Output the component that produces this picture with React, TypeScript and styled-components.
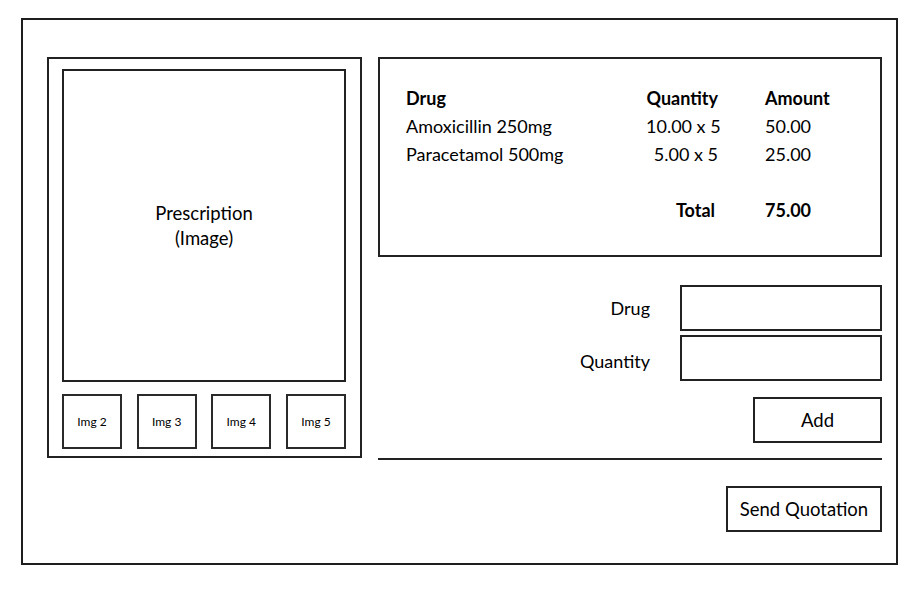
import React from "react";
import styled, { createGlobalStyle } from "styled-components";

const GlobalStyle = createGlobalStyle`
  html, body {
    margin: 0;
    padding: 0;
    background: #fff;
  }
  body {
    font-family: Lato, "Open Sans", sans-serif;
    color: #000;
  }
  * {
    box-sizing: border-box;
  }
`;

const Frame = styled.div`
  margin: 18px 0 0 21px;
  width: 877px;
  height: 547px;
  border: 2px solid #1e1e1e;
  display: flex;
  flex-direction: row;
  gap: 16px;
  padding: 37px 14px 0 24px;
`;

const Gallery = styled.div`
  width: 315px;
  height: 401px;
  border: 2px solid #222;
  display: flex;
  flex-direction: column;
  padding: 10px 14px 0 13px;
`;

const MainImage = styled.div`
  height: 313px;
  border: 2px solid #222;
  display: flex;
  align-items: center;
  justify-content: center;
  text-align: center;
  font-size: 18.5px;
  line-height: 25px;
`;

const ThumbRow = styled.div`
  display: flex;
  justify-content: space-between;
  margin-top: 12px;
`;

const Thumb = styled.div`
  width: 60px;
  height: 55px;
  border: 2px solid #2a2a2a;
  display: flex;
  align-items: center;
  justify-content: center;
  font-size: 12px;
`;

const RightColumn = styled.div`
  width: 504px;
  display: flex;
  flex-direction: column;
`;

const SummaryBox = styled.div`
  height: 200px;
  border: 2px solid #222;
  padding: 25px 0 0 26px;
`;

const SummaryGrid = styled.div`
  display: grid;
  grid-template-columns: 193px 72px 1fr;
  column-gap: 47px;
  font-size: 18px;
  line-height: 28px;
`;

const Cell = styled.div<{ $bold?: boolean; $right?: boolean; $inset?: number }>`
  font-weight: ${(p) => (p.$bold ? 700 : 400)};
  text-align: ${(p) => (p.$right ? "right" : "left")};
  padding-right: ${(p) => p.$inset ?? 0}px;
  white-space: nowrap;
`;

const Spacer = styled.div`
  grid-column: 1 / -1;
  height: 28px;
`;

const Form = styled.div`
  display: grid;
  grid-template-columns: 1fr 202px;
  column-gap: 30px;
  row-gap: 4px;
  margin-top: 28px;
  align-items: center;
`;

const Label = styled.div<{ $drop?: number }>`
  text-align: right;
  font-size: 18px;
  padding-top: ${(p) => p.$drop ?? 0}px;
`;

const Field = styled.div`
  height: 46px;
  border: 2px solid #222;
`;

const ButtonRow = styled.div<{ $top: number }>`
  display: flex;
  justify-content: flex-end;
  margin-top: ${(p) => p.$top}px;
`;

const Button = styled.div<{ $width: number }>`
  width: ${(p) => p.$width}px;
  height: 46px;
  border: 2px solid #222;
  display: flex;
  align-items: center;
  justify-content: center;
  font-size: 18.5px;
`;

const Divider = styled.div`
  height: 2px;
  background: #222;
  margin-top: 15px;
`;

const items = [
  { drug: "Amoxicillin 250mg", qty: "10.00 x 5", amount: "50.00" },
  { drug: "Paracetamol 500mg", qty: "5.00 x 5", amount: "25.00" },
];

export default function App() {
  return (
    <>
      <GlobalStyle />
      <Frame>
        <Gallery>
          <MainImage>
            Prescription
            <br />
            (Image)
          </MainImage>
          <ThumbRow>
            {["Img 2", "Img 3", "Img 4", "Img 5"].map((t) => (
              <Thumb key={t}>{t}</Thumb>
            ))}
          </ThumbRow>
        </Gallery>
        <RightColumn>
          <SummaryBox>
            <SummaryGrid>
              <Cell $bold>Drug</Cell>
              <Cell $bold $right>
                Quantity
              </Cell>
              <Cell $bold>Amount</Cell>
              {items.map((it) => (
                <React.Fragment key={it.drug}>
                  <Cell>{it.drug}</Cell>
                  <Cell $right>{it.qty}</Cell>
                  <Cell>{it.amount}</Cell>
                </React.Fragment>
              ))}
              <Spacer />
              <Cell />
              <Cell $bold $right $inset={3}>
                Total
              </Cell>
              <Cell $bold>75.00</Cell>
            </SummaryGrid>
          </SummaryBox>
          <Form>
            <Label>Drug</Label>
            <Field />
            <Label $drop={5}>Quantity</Label>
            <Field />
          </Form>
          <ButtonRow $top={16}>
            <Button $width={129}>Add</Button>
          </ButtonRow>
          <Divider />
          <ButtonRow $top={26}>
            <Button $width={156}>Send Quotation</Button>
          </ButtonRow>
        </RightColumn>
      </Frame>
    </>
  );
}
